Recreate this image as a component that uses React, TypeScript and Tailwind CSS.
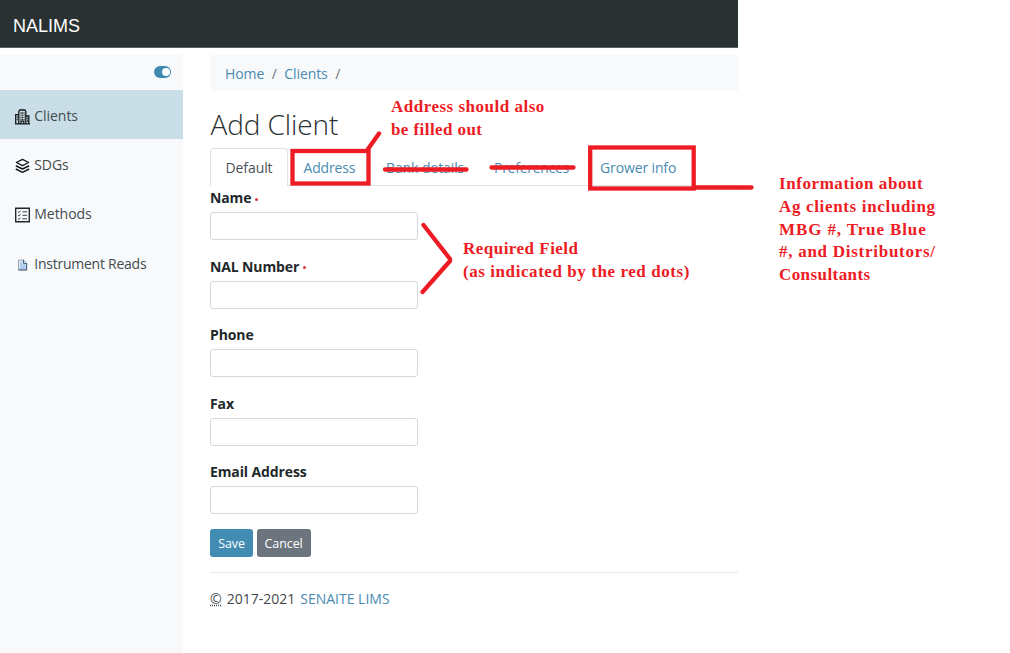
import React from 'react';

const sans = "font-['Open_Sans','Noto_Sans',sans-serif]";
const serif = "font-['Liberation_Serif',serif] font-bold text-[#ed1c24]";

function BuildingIcon() {
  return (
    <svg width="15" height="16" viewBox="0 0 15 16" fill="none" stroke="#15191a" strokeWidth="1.3">
      <path d="M3.8 14.5V2.5L4.8 1h5l1 1.5v12M.7 14.5V5.6h3M10.8 7h3v7.5M0 14.8h15M6 14.5v-2.3h2.8v2.3" />
      <path d="M5.5 4h4M5.5 6.2h4M5.5 8.4h4M5.5 10.5h4M1.8 8h1M1.8 10.5h1M12 9.5h1M12 12h1" strokeDasharray="1 .6" />
    </svg>
  );
}

function LayersIcon() {
  return (
    <svg width="15" height="16" viewBox="0 0 15 16" fill="none" stroke="#15191a" strokeWidth="1.3" strokeLinejoin="round">
      <path d="M7.5 1.3 13.6 4.5 7.5 7.700 1.400 4.500Z" />
      <path d="m.8 7.800 6.700 3.200 6.700-3.200M.8 11l6.700 3.300L14.200 11" strokeWidth="1.5" />
    </svg>
  );
}

function ChecklistIcon() {
  return (
    <svg width="15" height="16" viewBox="0 0 15 16" fill="none" stroke="#222829">
      <path d="M.7 1.2h13.6v13.6H.7Z" strokeWidth="1.4" />
      <path d="m3 4.7.9.8 1.5-1.7M3 8.2l.9.8 1.5-1.7M3 11.7l.9.8 1.5-1.7M7.5 4.8H12M7.5 8.3H12M7.5 11.8H12" strokeWidth=".9" />
    </svg>
  );
}

function DocumentIcon() {
  return (
    <svg width="15" height="16" viewBox="0 0 15 16" fill="none">
      <path d="M3.500 3h5L11.600 6v7H3.500Z" fill="#d9e8f8" stroke="#9aa4b0" />
      <path d="M8.500 3v3.500h3.100V13H3.500" stroke="#44607f" />
      <path d="M5 6h2M5 8h5.500M5 10h5.500M5 11.700h5.500" stroke="#8fb4e2" />
    </svg>
  );
}

const navItems = [
  { label: 'Clients', icon: <BuildingIcon />, active: true, tracking: 'tracking-[-0.05px]' },
  { label: 'SDGs', icon: <LayersIcon />, tracking: 'tracking-[-0.1px]' },
  { label: 'Methods', icon: <ChecklistIcon />, tracking: 'tracking-[-0.05px]' },
  { label: 'Instrument Reads', icon: <DocumentIcon />, tracking: 'tracking-[-0.25px]' },
];

const fields = [
  { label: 'Name', required: true },
  { label: 'NAL Number', required: true },
  { label: 'Phone' },
  { label: 'Fax' },
  { label: 'Email Address' },
];

export default function App() {
  return (
    <div className={`relative flex h-[653px] w-[1010px] flex-col overflow-hidden bg-white text-[14px] text-[#444b4d] ${sans}`}>
      <header className="flex h-[47.5px] w-[738px] shrink-0 items-center border-b border-[#596062] bg-[#2a3132] pl-[13px] pt-[6px] font-['Liberation_Sans',sans-serif] text-[18px] text-white">
        NALIMS
      </header>
      <div className="flex w-[738px] grow pt-[7.5px]">
        <aside className="w-[183px] shrink-0 bg-[#f8f9fb]">
          <div className="flex h-[35px] items-center justify-end pb-px pr-3">
            <span className="flex h-3 w-[17px] items-center justify-end rounded-full bg-[#3f8ab3] pr-[1.5px]">
              <span className="size-2 rounded-full bg-white" />
            </span>
          </div>
          <nav>
            {navItems.map((n) => (
              <a
                key={n.label}
                className={`flex h-[49.4px] items-center gap-[4.3px] pl-[15px] pt-px ${n.tracking} ${n.active ? 'bg-[#cadee7]' : ''}`}
              >
                <span className="mt-[3px]">{n.icon}</span>
                <span>{n.label}</span>
              </a>
            ))}
          </nav>
        </aside>
        <main className="ml-[27px] flex grow flex-col">
          <div className="flex h-9 items-center bg-[#f8f9fb] pl-[15px] tracking-[-0.09px] text-[#4a8bb3]">
            <a>Home</a>
            <span className="mx-[7.5px] text-[#6c757d]">/</span>
            <a>Clients</a>
            <span className="mx-[7.5px] text-[#6c757d]">/</span>
          </div>
          <h1 className="mt-[15px] flex h-9 items-center pl-[0.5px] text-[28px] font-light tracking-[-0.1px] text-[#2a3132]">Add Client</h1>
          <div className="mt-[6px] flex h-[38px] border-b border-[#dee2e6] text-[#4a8bb3]">
            <div className="-mb-px flex w-[78px] items-center justify-center rounded-t border border-b-0 border-[#dee2e6] bg-white tracking-[-0.1px] text-[#495057]">
              Default
            </div>
            <div className="flex w-[83px] items-center pl-[15.5px] pt-px tracking-[-0.15px]">Address</div>
            <div className="flex w-[108px] items-center pl-[15px] pt-px tracking-[-0.1px]">Bank details</div>
            <div className="flex w-[106px] items-center pl-[15px] pt-px tracking-[-0.27px]">Preferences</div>
            <div className="flex items-center pl-[15px] pt-px tracking-[-0.13px]">Grower info</div>
          </div>
          <form>
            {fields.map((f) => (
              <div key={f.label} className="h-[68.5px]">
                <label className="flex h-[26px] items-center pb-[3px] font-bold tracking-[-0.12px] text-[#212829]">
                  <span>{f.label}</span>
                  {f.required && <span className="ml-1 mt-[3px] size-[3px] rounded-full bg-[#dc3545]" />}
                </label>
                <input className="block h-7 w-52 rounded-[3px] border border-[#d2d8de] bg-white" />
              </div>
            ))}
            <div className="flex gap-[3.6px] text-[12.5px] tracking-[-0.1px] text-white">
              <button type="button" className="h-7 w-[43px] rounded-[3px] bg-[#428bb2] pt-[3px]">Save</button>
              <button type="button" className="h-7 w-[54px] rounded-[3px] bg-[#6c757d] pt-[3px]">Cancel</button>
            </div>
          </form>
          <footer className="mt-[15px] flex border-t border-[#e6e8e9] pt-[15px]">
            <span className="underline decoration-dotted">©</span>
            <span className="ml-[5px]">2017-2021</span>
            <a className="ml-[5px] text-[#4a8bb3]">SENAITE LIMS</a>
          </footer>
        </main>
      </div>

      <svg className="absolute left-0 top-0" width="1010" height="653" fill="none" stroke="#ed1c24" strokeWidth="4.3" strokeLinecap="round">
        <rect x="292.5" y="151" width="76" height="32.5" />
        <path d="M368 149 379 133.500M385 169.500H466.500M491.500 167.500H573.500M696 187.500H751.500M423.500 225 450 259M422.500 292 450 261" />
        <rect x="590.200" y="147.500" width="103.500" height="41" />
      </svg>

      <div className={`absolute left-[391px] top-[96px] whitespace-nowrap text-[17px] leading-[22.8px] ${serif}`}>
        <div className="tracking-[0.5px]">Address should also</div>
        <div className="tracking-[0.42px]">be filled out</div>
      </div>
      <div className={`absolute left-[463px] top-[237px] whitespace-nowrap text-[17px] leading-[23px] ${serif}`}>
        <div className="tracking-[0.48px]">Required Field</div>
        <div className="tracking-[0.57px]">(as indicated by the red dots)</div>
      </div>
      <div className={`absolute left-[779px] top-[173px] whitespace-nowrap text-[17px] leading-[22.8px] ${serif}`}>
        <div className="tracking-[0.57px]">Information about</div>
        <div className="tracking-[0.66px]">Ag clients including</div>
        <div className="tracking-[0.88px]">MBG #, True Blue</div>
        <div className="tracking-[0.73px]">#, and Distributors/</div>
        <div className="tracking-[0.42px]">Consultants</div>
      </div>
    </div>
  );
}
